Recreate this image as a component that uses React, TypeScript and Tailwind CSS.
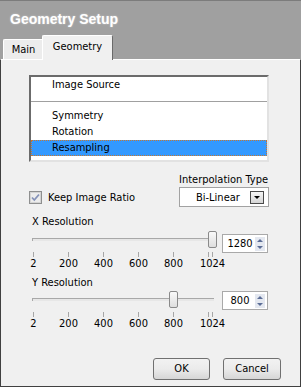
import React from "react";

const ticks = [2, 202, 402, 602, 802, 1002, 1024];
const labels = [2, 200, 400, 600, 800, 1024];

// local x inside the 194px slider column
const pos = (v: number) => 5 + ((Math.min(v, 1024) - 2) * 179) / 1022;

function Spin({ value, className }: { value: string; className?: string }) {
  return (
    <div className={"flex h-[19px] w-[46px] items-center border border-[#a9a9a9] bg-white " + (className ?? "")}>
      <span className="flex-1 pl-[2px] text-center leading-[13px]">{value}</span>
      <div className="mr-[2px] flex h-[14px] w-[10px] flex-col bg-[#e4e8f0]">
        <svg width="10" height="7" viewBox="0 0 10 7">
          <path d="M2 5h6L5 2z" fill="#5b6d96" />
        </svg>
        <svg width="10" height="7" viewBox="0 0 10 7">
          <path d="M2 2h6L5 5z" fill="#5b6d96" />
        </svg>
      </div>
    </div>
  );
}

function Slider({ value }: { value: number }) {
  return (
    <div className="w-[194px]">
      <div className="relative h-[17px]">
        <div className="absolute left-[4px] top-[7px] h-[3px] w-[182px] border-l border-t border-[#a8a8a8] border-b-white bg-[#e7e7e7]" />
        <div
          className="absolute top-0 h-[17px] w-[9px] rounded-[2px] border border-[#8a8a8a] bg-gradient-to-b from-[#fafafa] to-[#dedede]"
          style={{ left: pos(value) - 4 }}
        />
      </div>
      <svg className="mt-[4px] block" width="194" height="5">
        {ticks.map((t) => (
          <line key={t} x1={Math.round(pos(t)) + 0.5} x2={Math.round(pos(t)) + 0.5} y1="0" y2="5" stroke="#a6a6a6" />
        ))}
      </svg>
      <div className="relative h-[13px] leading-[13px]">
        {labels.map((l) => (
          <span key={l} className="absolute top-0 -translate-x-1/2" style={{ left: Math.round(pos(l)) + 0.5 }}>
            {l}
          </span>
        ))}
      </div>
    </div>
  );
}

export default function App() {
  return (
    <div className="flex h-[387px] w-[301px] flex-col bg-[#a0a0a0] font-['Tahoma','DejaVu_Sans_Condensed','Liberation_Sans',sans-serif] text-[11px] text-black">
      <div className="h-[35px] border-t border-[#7c7c7c] pl-[10px] pt-[10px]">
        <h1 className="font-['Liberation_Sans',sans-serif] text-[14px] font-bold leading-[16px] text-white [text-shadow:0_0_2px_rgba(255,255,255,0.5)]">
          Geometry Setup
        </h1>
      </div>

      <div className="flex h-[24px] items-end pl-[3px]">
        <div className="flex h-[20px] w-[41px] justify-center rounded-t-[2px] border-l border-t border-r border-white border-r-[#8c8c8c] bg-[#ececec] pt-[3px] leading-[13px]">
          Main
        </div>
        <div className="relative z-10 -mb-px -ml-[2px] flex h-[25px] w-[71px] justify-center rounded-t-[2px] border-l border-t border-r border-white border-r-[#6a6a6a] bg-[#f0f0f0] pt-[4px] leading-[13px]">
          Geometry
        </div>
      </div>

      <div className="flex flex-1 flex-col border-x border-b border-t border-[#404040] border-t-white bg-[#f0f0f0]">
        {/* list */}
        <div className="ml-[28px] mt-[15px] h-[87px] w-[240px] border-2 border-[#e2e2e2] border-l-[#6b6b6b] border-t-[#6b6b6b] bg-white">
          <div className="h-[15px] border border-transparent pl-[20px] leading-[13px]">Image Source</div>
          <div className="mt-[9px] h-px bg-[#a0a0a0]" />
          <div className="mt-[6px]">
            <div className="h-[16px] border border-transparent pl-[20px] leading-[14px]">Symmetry</div>
            <div className="h-[16px] border border-transparent pl-[20px] leading-[14px]">Rotation</div>
            <div className="h-[16px] border border-dotted border-[#c8772e] bg-[#3399ff] pl-[20px] leading-[14px]">Resampling</div>
          </div>
        </div>

        {/* options */}
        <div className="ml-[28px] mt-[11px] flex w-[240px] items-end justify-between">
          <label className="flex h-[20px] items-center gap-[6px]">
            <svg width="13" height="13" viewBox="0 0 13 13">
              <rect x="0.5" y="0.5" width="12" height="12" fill="#e3e3e3" stroke="#8e8f8f" />
              <rect x="1.5" y="1.5" width="10" height="10" fill="#ececec" stroke="#d4d4d4" />
              <path d="M3 6.5l2.3 2.5L10 3.5" fill="none" stroke="#8592b8" strokeWidth="1.8" />
            </svg>
            <span className="leading-[13px]">Keep Image Ratio</span>
          </label>
          <div className="w-[90px]">
            <div className="leading-[13px]">Interpolation Type</div>
            <div className="mt-px flex h-[20px] items-start border border-[#a2a2a2] bg-white">
              <span className="flex-1 pl-[16px] pt-[3px] leading-[13px]">Bi-Linear</span>
              <div className="mr-[4px] mt-[3px] flex h-[13px] w-[14px] items-center justify-center border border-[#4a4a4a] bg-gradient-to-b from-[#f6f6f6] to-[#d6d6d6]">
                <svg width="6" height="3" viewBox="0 0 6 3">
                  <path d="M0 0h6L3 3z" fill="#000" />
                </svg>
              </div>
            </div>
          </div>
        </div>

        {/* X resolution */}
        <div className="ml-[31px] mt-[8px] leading-[13px]">X Resolution</div>
        <div className="ml-[27px] mt-[3px] flex items-start">
          <Slider value={1280} />
          <Spin value="1280" className="mt-[3px]" />
        </div>

        {/* Y resolution */}
        <div className="ml-[31px] mt-[6px] leading-[13px]">Y Resolution</div>
        <div className="ml-[27px] mt-[2px] flex items-start">
          <Slider value={800} />
          <Spin value="800" />
        </div>

        <div className="mt-[28px] flex justify-end gap-[13px] pr-[19px]">
          <button className="h-[22px] w-[57px] rounded-[3px] border border-[#707070] bg-gradient-to-b from-[#f2f2f2] via-[#ebebeb] to-[#d6d6d6]">
            OK
          </button>
          <button className="h-[22px] w-[58px] rounded-[3px] border border-[#707070] bg-gradient-to-b from-[#f2f2f2] via-[#ebebeb] to-[#d6d6d6]">
            Cancel
          </button>
        </div>
      </div>
    </div>
  );
}
